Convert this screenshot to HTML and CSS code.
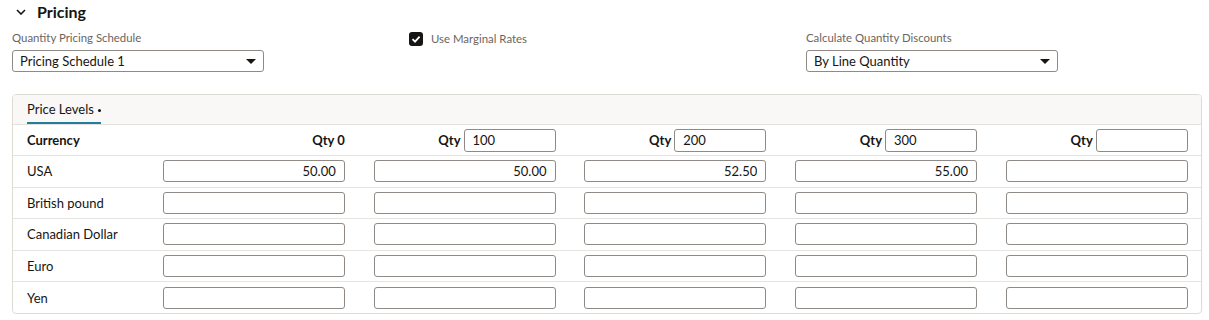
FILE: index.html
```html
<!DOCTYPE html>
<html lang="en">
<head>
    <meta charset="UTF-8">
    <title>Pricing</title>
    <link rel="stylesheet" href="styles.css">
</head>
<body>
<div class="section">
    <div class="sectionHead">
        <svg class="chevron" width="10" height="6" viewBox="0 0 10 6"><path d="M1 1 L5 5 L9 1" fill="none" stroke="#161513" stroke-width="1.6"/></svg>
        <span class="sectionTitle">Pricing</span>
    </div>
    <div class="fields">
        <div class="field">
            <label class="fieldLabel">Quantity Pricing Schedule</label>
            <div class="select">
                <span>Pricing Schedule 1</span>
                <span class="caret"></span>
            </div>
        </div>
        <div class="field checkField">
            <span class="checkbox">
                <svg width="14" height="14" viewBox="0 0 14 14"><path d="M3.5 7.2 L6 9.6 L10.6 4.6" fill="none" stroke="#fff" stroke-width="1.8"/></svg>
            </span>
            <span class="checkLabel">Use Marginal Rates</span>
        </div>
        <div class="field">
            <label class="fieldLabel">Calculate Quantity Discounts</label>
            <div class="select">
                <span>By Line Quantity</span>
                <span class="caret"></span>
            </div>
        </div>
    </div>

    <div class="panel">
        <div class="tabBar">
            <span class="tab">Price Levels <span class="dot"></span></span>
        </div>
        <div class="row headRow">
            <div class="cell currency">Currency</div>
            <div class="cell">Qty 0</div>
            <div class="cell">Qty <input class="qtyInput" value="100"></div>
            <div class="cell">Qty <input class="qtyInput" value="200"></div>
            <div class="cell">Qty <input class="qtyInput" value="300"></div>
            <div class="cell">Qty <input class="qtyInput" value=""></div>
        </div>
        <div class="row">
            <div class="cell currency">USA</div>
            <div class="cell"><input class="price" value="50.00"></div>
            <div class="cell"><input class="price" value="50.00"></div>
            <div class="cell"><input class="price" value="52.50"></div>
            <div class="cell"><input class="price" value="55.00"></div>
            <div class="cell"><input class="price" value=""></div>
        </div>
        <div class="row">
            <div class="cell currency">British pound</div>
            <div class="cell"><input class="price"></div>
            <div class="cell"><input class="price"></div>
            <div class="cell"><input class="price"></div>
            <div class="cell"><input class="price"></div>
            <div class="cell"><input class="price"></div>
        </div>
        <div class="row">
            <div class="cell currency">Canadian Dollar</div>
            <div class="cell"><input class="price"></div>
            <div class="cell"><input class="price"></div>
            <div class="cell"><input class="price"></div>
            <div class="cell"><input class="price"></div>
            <div class="cell"><input class="price"></div>
        </div>
        <div class="row">
            <div class="cell currency">Euro</div>
            <div class="cell"><input class="price"></div>
            <div class="cell"><input class="price"></div>
            <div class="cell"><input class="price"></div>
            <div class="cell"><input class="price"></div>
            <div class="cell"><input class="price"></div>
        </div>
        <div class="row lastRow">
            <div class="cell currency">Yen</div>
            <div class="cell"><input class="price"></div>
            <div class="cell"><input class="price"></div>
            <div class="cell"><input class="price"></div>
            <div class="cell"><input class="price"></div>
            <div class="cell"><input class="price"></div>
        </div>
    </div>
</div>
</body>
</html>
```

FILE: styles.css
```css
*{ padding: 0; margin: 0; box-sizing: border-box;}
body{ font-family: Lato, "Liberation Sans", sans-serif; color: #161513; background: #fff;}
.section{ padding: 0 7px 0 12px;}

.sectionHead{ height: 25px; display: flex; align-items: center; padding-left: 4px; padding-bottom: 3px;}
.chevron{ display: block; margin-top: 1px;}
.sectionTitle{ font-size: 16px; font-weight: bold; margin-left: 11px;}

.fields{ display: grid; grid-template-columns: repeat(3, 397px); padding-top: 6px;}
.field{ display: flex; flex-direction: column;}
.fieldLabel{ font-size: 11.4px; color: #6b655f; line-height: 14px; height: 19px;}
.select{ width: 252px; height: 22px; border: 1px solid #8f8a85; border-radius: 3px; display: flex; align-items: center; justify-content: space-between; padding: 0 6px 0 7px; font-size: 13px;}
.caret{ width: 0; height: 0; border-left: 5px solid transparent; border-right: 5px solid transparent; border-top: 5px solid #161513; margin-right: 1px;}

.checkField{ flex-direction: row; align-items: flex-start; padding-top: 1px;}
.checkbox{ width: 14px; height: 14px; background: #161513; border-radius: 3px; display: block;}
.checkbox svg{ display: block;}
.checkLabel{ font-size: 11.4px; color: #6b655f; margin-left: 8px; line-height: 14px;}

.panel{ margin-top: 22px; border: 1px solid #dedbd7; border-radius: 4px; overflow: hidden;}
.tabBar{ height: 30px; background: #f9f8f6; border-bottom: 1px solid #e4e1dd; padding-left: 14px; display: flex; align-items: flex-end;}
.tab{ font-size: 13px; line-height: 26px; border-bottom: 2px solid #227e9e; height: 28px; padding-top: 0; display: flex; align-items: center;}
.dot{ width: 3px; height: 3px; border-radius: 50%; background: #161513; margin-left: 4px; margin-top: 2px;}

.row{ display: grid; grid-template-columns: 107px repeat(5, 182px); column-gap: 28.75px; padding: 0 14px; height: 31.6px; border-bottom: 1px solid #e6e4e1; align-items: center; font-size: 13px;}
.lastRow{ border-bottom: none; height: 30.6px;}
.cell{ display: flex; justify-content: flex-end; align-items: center;}
.cell.currency{ justify-content: flex-start;}
.headRow .cell{ font-weight: bold;}
.headRow{ height: 31px;}

input{ font-family: Lato, "Liberation Sans", sans-serif; font-size: 13px; color: #161513; border: 1px solid #8f8a85; border-radius: 3px; background: #fff; outline: none;}
.price{ width: 182px; height: 22px; text-align: right; padding: 0 8px;}
.qtyInput{ width: 92px; height: 23px; margin-left: 3px; padding: 0 8px; font-weight: normal;}
```
